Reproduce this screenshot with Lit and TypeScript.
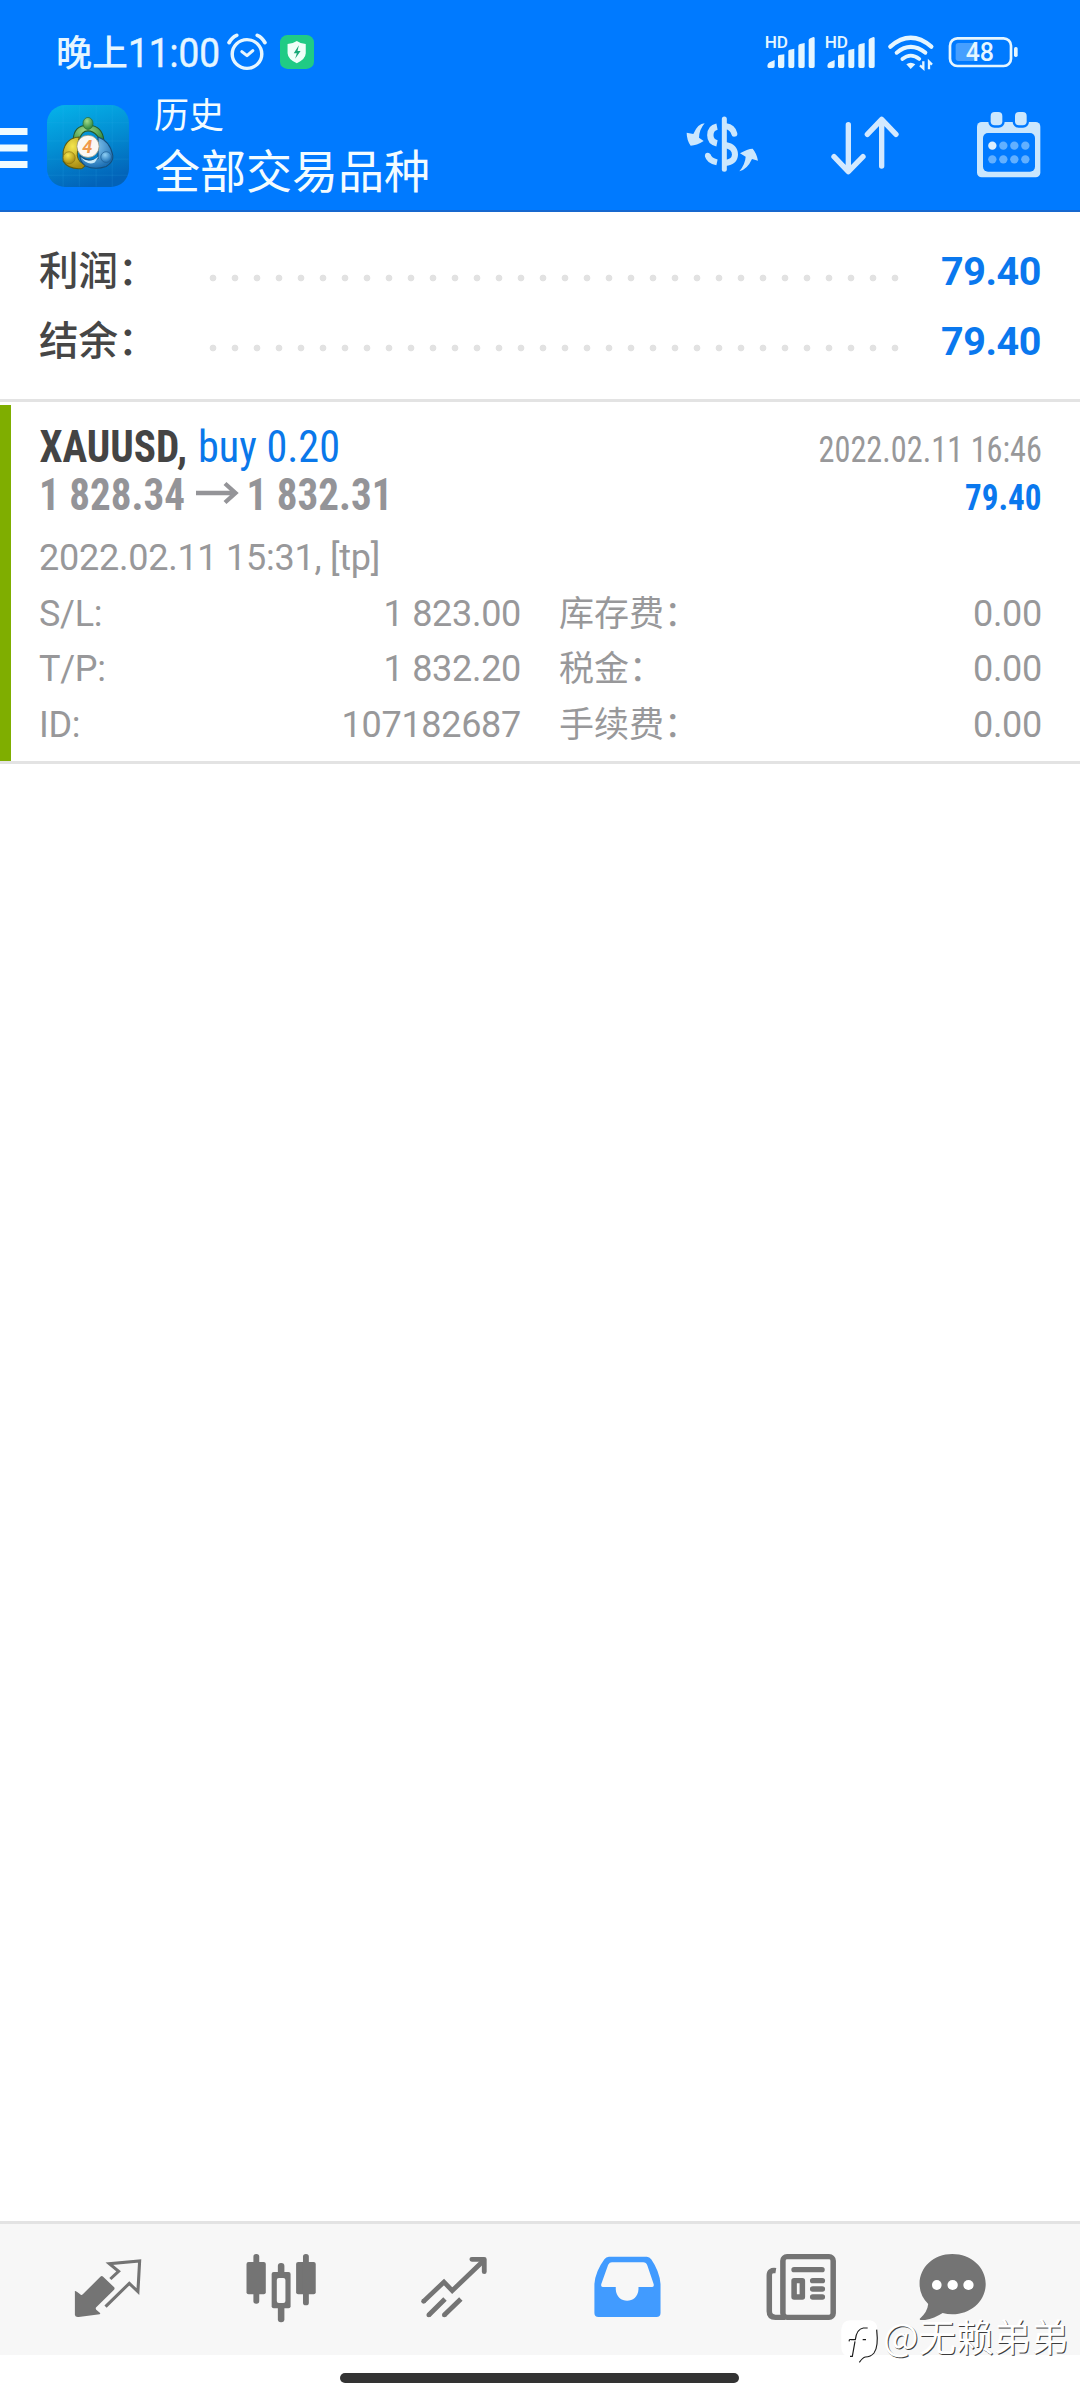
import { LitElement, html, css, svg } from "lit";
import { customElement } from "lit/decorators.js";

const ink = "#e6f6ff";
const soft = "#cbe7fd";

const signal = () => svg`
  <text x="2" y="48" font-size="49" font-weight="500" textLength="70" lengthAdjust="spacingAndGlyphs" fill="#e6f6ff">HD</text>
  <path fill="#e6f6ff" d="M10 102 Q10 94 17 91 L32 84 V102 Q32 108 27 108 H15 Q10 108 10 102Z
    M42 73 Q42 70 45 69 L61 67 V103 Q61 108 56 108 H47 Q42 108 42 103Z
    M73 58 Q73 54 77 53 L91 50 V103 Q91 108 86 108 H78 Q73 108 73 103Z
    M103 42 Q103 37 108 36 L122 33 V103 Q122 108 117 108 H108 Q103 108 103 103Z
    M134 25 Q134 20 139 19 L148 15 Q152 15 152 19 V103 Q152 108 147 108 H139 Q134 108 134 103Z"/>`;

@customElement("status-bar")
class StatusBar extends LitElement {
  static styles = css`
    :host { display: flex; height: 63px; padding: 32px 61px 0 50px; box-sizing: content-box; }
    svg { display: block; height: 40px; flex: none; overflow: visible; font-family: Roboto, "Noto Sans CJK SC", sans-serif; }
    .clock { width: 172px; height: 60px; margin-top: -10px; }
    .alarm { width: 42px; margin-left: 4px; }
    .guard { width: 34px; margin-left: 12px; }
    .sig { width: 52px; margin-left: auto; }
    .sig2 { width: 52px; margin-left: 8px; }
    .wifi { width: 48px; margin-left: 11px; }
    .batt { width: 71px; margin-left: 13px; }
  `;
  render() {
    return html`
      <svg class="clock" viewBox="50 22 172 60" fill="#e6f6ff">
        <text x="56" y="65.500" font-size="36" font-weight="500" textLength="72" lengthAdjust="spacingAndGlyphs">晚上</text>
        <text x="128" y="66.500" font-size="41" textLength="92" lengthAdjust="spacingAndGlyphs" stroke="#e6f6ff" stroke-width="0.500">11:00</text>
      </svg>
      <svg class="alarm" viewBox="655 96 122 120" preserveAspectRatio="none" fill="none" stroke=${ink} stroke-linecap="round" stroke-linejoin="round">
        <circle cx="716" cy="162" r="43" stroke-width="10"/>
        <path d="M701 155 L716 167 L733 152" stroke-width="9"/>
        <path d="M664 128 Q672 112 686 106 M746 106 Q760 112 768 128" stroke-width="11"/>
      </svg>
      <svg class="guard" viewBox="816 96 99 120" preserveAspectRatio="none">
        <rect x="816" y="105" width="99" height="102" rx="22" fill="#20cb85"/>
        <path d="M865 123 Q875 131 891 132 V160 Q890 178 865 190 Q839 178 838 160 V132 Q854 131 865 123Z" fill="#effff9"/>
        <path d="M871 136 L856 160 H865 L860 176 L876 153 H867Z" fill="#18a878"/>
      </svg>
      <svg class="sig" viewBox="0 0 156 120">${signal()}</svg>
      <svg class="sig2" viewBox="0 0 156 120">${signal()}</svg>
      <svg class="wifi" viewBox="741 96 144 120" fill="none" stroke=${ink} stroke-linecap="round">
        <path d="M751 140 Q812 87 874 140" stroke-width="13"/>
        <path d="M770 158 Q812 123 856 158" stroke-width="12"/>
        <path d="M787 177 Q812 157 838 177" stroke-width="11"/>
        <path d="M799 193 Q812 183 826 193 L812 207Z" fill=${ink} stroke="none"/>
        <path d="M850 184 V205 L840 196 M867 208 V185 L876 194" stroke-width="7" stroke-linecap="butt"/>
      </svg>
      <svg class="batt" viewBox="924 96 213 120">
        <rect x="930" y="115" width="183" height="83" rx="22" fill="none" stroke=${ink} stroke-width="8"/>
        <rect x="947" y="129" width="58" height="54" rx="8" fill="#469fff"/>
        <rect x="1122" y="141" width="11" height="30" rx="5" fill=${ink}/>
        <text x="977" y="183" font-size="75" font-weight="500" textLength="85" lengthAdjust="spacingAndGlyphs" fill=${ink}>48</text>
      </svg>`;
  }
}

@customElement("app-toolbar")
class AppToolbar extends LitElement {
  static styles = css`
    :host { display: flex; height: 115px; align-items: flex-start; border-bottom: 2px solid #1768cf;
      font-family: Roboto, "Noto Sans CJK SC", sans-serif; color: #f3fcff; }
    svg { display: block; flex: none; }
    .menu { width: 28px; height: 42px; margin-top: 33px; }
    .logo { width: 82px; height: 82px; margin: 10px 0 0 19px; }
    .titles { margin: 2px 0 0 25px; width: 400px; }
    .small { height: 40px; line-height: 40px; font-size: 35px; }
    .big { height: 60px; line-height: 60px; font-size: 46px; margin-top: 5px; }
    .cash { width: 76px; height: 60px; margin: 20px 0 0 130px; }
    .sort { width: 70px; height: 60px; margin: 20px 0 0 70px; }
    .cal { width: 64px; height: 68px; margin: 16px 0 0 76.500px; }
  `;
  render() {
    return html`
      <svg class="menu" viewBox="0 128 28 42" fill="#effbff">
        <rect x="-2" y="128" width="29.500" height="7"/><rect x="-2" y="144.500" width="29.500" height="7"/><rect x="-2" y="161" width="29.500" height="7"/>
      </svg>
      <svg class="logo" viewBox="142 45 244 244">
        <defs>
          <linearGradient id="bg" x1="0.200" y1="0" x2="0.500" y2="1"><stop offset="0" stop-color="#05b0e8"/><stop offset="0.450" stop-color="#0390d4"/><stop offset="1" stop-color="#0262b8"/></linearGradient>
          <radialGradient id="g" cx="0.400" cy="0.300" r="0.700"><stop offset="0" stop-color="#a5dc8a"/><stop offset="1" stop-color="#28843c"/></radialGradient>
          <radialGradient id="y" cx="0.400" cy="0.300" r="0.700"><stop offset="0" stop-color="#f4e64e"/><stop offset="1" stop-color="#a88a10"/></radialGradient>
          <radialGradient id="b" cx="0.400" cy="0.300" r="0.700"><stop offset="0" stop-color="#8fd0f5"/><stop offset="1" stop-color="#1c6fb4"/></radialGradient>
        </defs>
        <rect x="142" y="45" width="244" height="244" rx="54" fill="url(#bg)"/>
        <path d="M190 46V288M238 46V288M288 46V288M336 46V288M143 98H385M143 152H385M143 206H385M143 254H385" stroke="#3cbcf0" stroke-opacity="0.220" stroke-width="2"/>
        <path d="M220 158 Q218 112 252 106 H276 Q312 114 312 162 Q298 150 291 136 Q279 122 264 122 Q244 122 238 150Z" fill="url(#g)" stroke="#24582b" stroke-width="3"/>
        <path d="M238 140 Q198 142 190 184 V212 Q206 238 246 234 L260 222 Q236 220 232 196 L234 160Z" fill="url(#y)" stroke="#5a5b12" stroke-width="3"/>
        <path d="M294 140 Q330 152 338 196 Q340 214 318 228 Q284 240 256 226 Q240 214 240 196 Q266 218 294 204Z" fill="url(#b)" stroke="#164e7a" stroke-width="3"/>
        <path d="M242 200 Q266 222 296 198 L284 216 Q262 226 242 200Z" fill="#c9ebfb"/>
        <ellipse cx="264" cy="100" rx="15" ry="18" fill="url(#g)" stroke="#2a6a32" stroke-width="2"/>
        <circle cx="208" cy="202" r="18" fill="url(#y)" stroke="#8a7412" stroke-width="2"/>
        <circle cx="318" cy="200" r="16" fill="url(#b)" stroke="#205e92" stroke-width="2"/>
        <circle cx="264" cy="168" r="33" fill="#fbf8f4" stroke="#8a8a70" stroke-width="2"/>
        <text x="262" y="187" font-size="54" font-weight="700" font-style="italic" text-anchor="middle" fill="#f09a4c" font-family="Roboto, sans-serif">4</text>
      </svg>
      <div class="titles">
        <div class="small">历史</div>
        <div class="big">全部交易品种</div>
      </div>
      <svg class="cash" viewBox="42 45 228 180" fill="none" stroke=${soft}>
        <path d="M163 57 V208" stroke-width="15" stroke-linecap="round"/>
        <path d="M141 80 Q121 84 121 106 Q121 126 141 130" stroke-width="19"/>
        <path d="M113 165 Q117 182 141 187" stroke-width="18"/>
        <circle cx="113" cy="166" r="8" fill=${soft} stroke="none"/>
        <path d="M168 79 Q188 82 193 101" stroke-width="18" stroke-linecap="round"/>
        <path d="M166 135 Q195 140 195 164 Q194 186 166 189" stroke-width="18"/>
        <path d="M104 70 Q84 70 70 102 L50 98 Q50 120 62 137 Q80 137 101 123 L87 113 Q88 88 104 70Z" fill=${soft} stroke="none"/>
        <path d="M208 214 Q232 208 246 177 L264 182 Q260 160 248 146 Q232 146 210 160 L227 170 Q226 192 208 214Z" fill=${soft} stroke="none"/>
      </svg>
      <svg class="sort" viewBox="570 345 210 180" fill="none" stroke="#d3e9ff" stroke-width="16" stroke-linecap="round" stroke-linejoin="round">
        <path d="M625 374 V514 M582 470 L625 515 L669 470"/>
        <path d="M725 498 V358 M682 403 L725 358 L768 403"/>
      </svg>
      <svg class="cal" viewBox="1010 333 192 204">
        <rect x="1010" y="366" width="190" height="166" rx="14" fill=${soft}/>
        <rect x="1028" y="399" width="156" height="116" rx="15" fill="#007aff"/>
        <rect x="1044" y="329" width="49" height="54" rx="18" fill="#007aff"/>
        <rect x="1117" y="329" width="49" height="54" rx="18" fill="#007aff"/>
        <rect x="1051" y="336" width="35" height="40" rx="12" fill=${soft}/>
        <rect x="1124" y="336" width="35" height="40" rx="12" fill=${soft}/>
        ${[437, 478].map((y) => [1056, 1089, 1122, 1155].map((x) => svg`<circle cx=${x} cy=${y} r="12.500" fill=${x === 1056 && y === 437 ? "#dcf0ff" : "#62b0ff"}/>`))}
      </svg>`;
  }
}

@customElement("account-summary")
class AccountSummary extends LitElement {
  static styles = css`
    :host { display: block; padding: 24.500px 39px 22.500px 39px; border-bottom: 3px solid #e3e3e3; font-family: Roboto, "Noto Sans CJK SC", sans-serif; }
    .row { display: flex; height: 70px; line-height: 70px; font-size: 39.500px; }
    .label { width: 163px; color: #464646; font-weight: 500; white-space: nowrap; }
    .dots { width: 704px; height: 22px; margin-top: 30.500px;
      background: radial-gradient(circle at 50% 50%, #e2e2e2 3px, transparent 3.700px) 0 0 / 22px 22px repeat-x; }
    .value { margin-left: auto; color: #0a78ee; font-weight: 700; letter-spacing: -0.400px; }
  `;
  rows = [["利润：", "79.40"], ["结余：", "79.40"]];
  render() {
    return html`${this.rows.map(([l, v]) => html`
      <div class="row"><span class="label">${l}</span><span class="dots"></span><span class="value">${v}</span></div>`)}`;
  }
}

@customElement("deal-card")
class DealCard extends LitElement {
  static styles = css`
    :host { display: block; margin-top: 3px; border-bottom: 3px solid #e3e3e3; font-family: Roboto, "Noto Sans CJK SC", sans-serif; color: #98989a; }
    .body { height: 356px; box-sizing: border-box; border-left: 11px solid #7fae00; padding: 0 38px 0 28px; }
    .head { display: flex; justify-content: space-between; height: 126px; }
    svg { display: block; height: 125px; overflow: visible; font-family: "Roboto Condensed", Roboto, sans-serif; font-stretch: 75%; }
    .left { width: 380px; }
    .right { width: 250px; }
    .line { height: 55.500px; line-height: 55.500px; font-size: 36px; letter-spacing: -0.250px; white-space: nowrap; }
    .grid { display: grid; grid-template-columns: 482px 483px; column-gap: 38px; }
    .cell { display: flex; justify-content: space-between; height: 55.500px; line-height: 55.500px; font-size: 36px; letter-spacing: -0.300px; }
    .cjk { font-size: 35px; letter-spacing: 0; }
  `;
  rows = [
    ["S/L:", "1 823.00", "库存费：", "0.00"],
    ["T/P:", "1 832.20", "税金：", "0.00"],
    ["ID:", "107182687", "手续费：", "0.00"],
  ];
  render() {
    return html`<div class="body">
      <div class="head">
        <svg class="left" viewBox="39 405 380 125">
          <text x="39.500" y="461.500" font-size="43.500" font-weight="700" fill="#444" textLength="147.500" lengthAdjust="spacingAndGlyphs">XAUUSD,</text>
          <text x="198" y="461.500" font-size="43.500" fill="#0a78ea" textLength="142" lengthAdjust="spacingAndGlyphs">buy 0.20</text>
          <g fill="#949498" font-size="43.500" font-weight="700">
            <text x="39" y="510" textLength="146" lengthAdjust="spacingAndGlyphs">1 828.34</text>
            <text x="246.500" y="510" textLength="146" lengthAdjust="spacingAndGlyphs">1 832.31</text>
          </g>
          <path d="M196 493 H236 M225 483.500 L235.500 493 L225 502.500" fill="none" stroke="#949498" stroke-width="4.300"/>
        </svg>
        <svg class="right" viewBox="792 405 250 125">
          <text x="818.500" y="461.500" font-size="36" fill="#98989a" textLength="223.500" lengthAdjust="spacingAndGlyphs">2022.02.11 16:46</text>
          <text x="965" y="510" font-size="36.500" font-weight="700" fill="#0a78ee" textLength="76.500" lengthAdjust="spacingAndGlyphs">79.40</text>
        </svg>
      </div>
      <div class="line">2022.02.11 15:31, [tp]</div>
      <div class="grid">
        ${this.rows.map(([a, b, c, d]) => html`
          <div class="cell"><span>${a}</span><span>${b}</span></div>
          <div class="cell"><span class="cjk">${c}</span><span>${d}</span></div>`)}
      </div>
    </div>`;
  }
}

@customElement("bottom-nav")
class BottomNav extends LitElement {
  static styles = css`
    :host { display: grid; grid-template-columns: repeat(5, 173px) 132px; padding-left: 21px; height: 131px; border-top: 3px solid #e3e3e3; background: #f7f7f7; }
    svg { display: block; width: 80px; height: 80px; margin: 26px auto 0; }
  `;
  render() {
    const c = "#747474";
    return html`
      <svg viewBox="199 150 232.300 240" preserveAspectRatio="none">
        <path d="M219 273 Q221 271 237 285 Q239 286 242 283 L293 230 Q297 226 301 230 L333 262 Q336 266 332 270 L281 322 Q278 325 281 329 L293 340 L291 343 L230 351 Q220 352 219 345Z" fill=${c}/>
        <path d="M322 237 L346 214 L319 191 L407 183 L402 275 L377 250 L308 320" fill="none" stroke=${c} stroke-width="9"/>
      </svg>
      <svg viewBox="700 150 232.300 240" preserveAspectRatio="none" fill=${c}>
        <rect x="716" y="186" width="56" height="97" rx="6"/><rect x="736" y="162" width="17" height="149" rx="8"/>
        <rect x="860" y="186" width="57" height="97" rx="6"/><rect x="880" y="162" width="17" height="154" rx="8"/>
        <rect x="807" y="189" width="19" height="178" rx="9"/><rect x="789" y="216" width="55" height="109" rx="6"/>
        <rect x="804" y="234" width="25" height="75" rx="6" fill="#f7f7f7"/>
      </svg>
      <svg viewBox="1202 150 232.300 240" preserveAspectRatio="none" fill="none" stroke=${c} stroke-width="13">
        <path d="M1229 305 L1289 246 L1313 272 L1406 180" stroke-width="14"/><path d="M1370 178 H1406 V215" stroke-width="14" stroke-linejoin="round" stroke-linecap="round"/>
        <path d="M1245 345 L1292 297 M1290 345 L1338 297" stroke-width="14"/>
        <g fill=${c} stroke="none"><circle cx="1230" cy="304" r="7"/><circle cx="1245" cy="345" r="7"/><circle cx="1290" cy="345" r="7"/></g>
      </svg>
      <svg viewBox="136.500 150 232.300 240" preserveAspectRatio="none">
        <path fill="#419bff" fill-rule="evenodd" d="M200 170 H310 Q318 170 323 178 Q347 214 350 252 V339 Q350 351 338 351 H170 Q158 351 158 339 V252 Q161 214 187 178 Q192 170 200 170Z
          M209 187 Q202 187 198 194 L178 252 Q176 261 182 261 H220 V268 C222 314 284 314 286 268 V261 H326 Q332 261 330 252 L312 197 Q308 187 300 187Z"/>
      </svg>
      <svg viewBox="639 150 232.300 240" preserveAspectRatio="none" fill="none" stroke=${c}>
        <rect x="705.500" y="170" width="146" height="182" rx="12" stroke-width="16"/>
        <path d="M685 212 Q666 209 666 226 V334 Q666 352 684 352 H712" stroke-width="16"/>
        <path d="M738 209 H819 M792 242 H820 M792 267 H820 M792 291 H820" stroke-width="16" stroke-linecap="round"/>
        <rect x="738" y="242" width="24" height="49" stroke-width="16" stroke-linejoin="round"/>
      </svg>
      <svg viewBox="1081 150 232.300 240" preserveAspectRatio="none">
        <path d="M1198 162 C1252 162 1295 201 1295 252 C1295 303 1252 343 1198 343 Q1183 343 1170 339 Q1146 355 1119 360 H1105 L1103 357 Q1126 336 1128 312 Q1103 286 1103 252 C1103 201 1144 162 1198 162Z" fill=${c}/>
        <g fill="#fff"><ellipse cx="1153" cy="255" rx="14" ry="15"/><ellipse cx="1199" cy="255" rx="15" ry="15"/><ellipse cx="1245" cy="255" rx="15" ry="15"/></g>
      </svg>`;
  }
}

@customElement("app-root")
class AppRoot extends LitElement {
  static styles = css`
    :host { display: flex; flex-direction: column; position: relative; width: 1080px; height: 2400px; background: #fff; overflow: hidden; }
    .top { background: #007aff; height: 212px; display: flex; flex-direction: column; }
    .space { flex: 1; }
    .gesture { height: 45px; display: flex; justify-content: center; align-items: flex-start; }
    .pill { width: 399px; height: 10px; margin: 18px 1px 0 0; border-radius: 5px; background: #333; }
    .mark { position: absolute; left: 840px; top: 2308px; display: flex; align-items: center; height: 54px; }
    .badge { display: block; width: 40px; height: 46px; margin-top: 13px; }
    .name { margin-left: 3px; font: 400 37.500px/54px "Noto Sans CJK SC", sans-serif; color: #fff; text-shadow: 1px 1px 0 #3c3c3c; white-space: nowrap; }
  `;
  render() {
    return html`
      <div class="top"><status-bar></status-bar><app-toolbar></app-toolbar></div>
      <account-summary></account-summary>
      <deal-card></deal-card>
      <div class="space"></div>
      <bottom-nav></bottom-nav>
      <div class="gesture"><div class="pill"></div></div>
      <div class="mark">
        <svg class="badge" viewBox="30 26 120 138">
          <path d="M60 30 H120 Q142 34 142 56 V104 Q140 132 118 138 L88 156 L86 138 H56 Q34 134 34 112 V56 Q36 32 60 30Z" fill="#fff"/>
          <path d="M58 93 Q56 86 64 88 L76 88 Q80 56 100 53 H113 M98 88 H108 M75 93 L67 138 H60 M140 58 Q146 110 132 128 Q122 140 106 140 Q98 142 88 156" fill="none" stroke="#1c1c1c" stroke-width="3.500"/>
        </svg>
        <span class="name">@无赖弟弟</span>
      </div>`;
  }
}
